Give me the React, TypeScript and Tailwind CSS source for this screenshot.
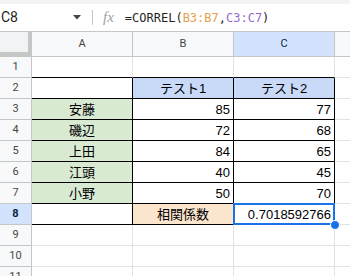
import React from "react";

type Cell = {
  text?: string;
  fill?: string;
  align?: "left" | "center" | "right";
  boxed?: boolean;
  selected?: boolean;
};

const names = ["安藤", "磯辺", "上田", "江頭", "小野"];
const test1 = [85, 72, 84, 40, 50];
const test2 = [77, 68, 65, 45, 70];

function buildRows(): Cell[][] {
  const rows: Cell[][] = [];
  // row 1 — empty, but its bottom edge is the top of the table
  rows.push([{ boxed: false }, { boxed: false }, { boxed: false }]);
  rows.push([
    { boxed: true },
    { text: "テスト1", fill: "bg-[#c9daf8]", align: "center", boxed: true },
    { text: "テスト2", fill: "bg-[#c9daf8]", align: "center", boxed: true },
  ]);
  names.forEach((n, i) => {
    rows.push([
      { text: n, fill: "bg-[#d9ead3]", align: "center", boxed: true },
      { text: String(test1[i]), align: "right", boxed: true },
      { text: String(test2[i]), align: "right", boxed: true },
    ]);
  });
  rows.push([
    { boxed: true },
    { text: "相関係数", fill: "bg-[#fce5cd]", align: "center", boxed: true },
    { text: "0.7018592766", align: "right", boxed: true, selected: true },
  ]);
  rows.push([{}, {}, {}]);
  rows.push([{}, {}, {}]);
  rows.push([{}, {}, {}]);
  return rows;
}

function GridCell({ cell, topOfTable }: { cell: Cell; topOfTable: boolean }) {
  const black = cell.boxed || topOfTable;
  const alignCls =
    cell.align === "center"
      ? "justify-center"
      : cell.align === "right"
      ? "justify-end pr-[3px]"
      : "justify-start pl-[3px]";
  return (
    <div
      className={`relative w-[101px] shrink-0 h-full flex items-center border-b ${
        black ? "border-b-black" : "border-b-[#e2e2e2]"
      } border-r ${cell.boxed ? "border-r-black" : "border-r-[#e2e2e2]"} ${
        cell.fill ?? "bg-white"
      } ${alignCls} ${cell.selected ? "z-10" : ""}`}
    >
      <span className="text-[13px] leading-none text-black whitespace-nowrap">{cell.text}</span>
      {cell.selected && (
        <>
          <div className="absolute -left-[1px] -top-[1px] -right-[1px] -bottom-[1px] border-2 border-[#1a73e8] pointer-events-none" />
          <div className="absolute -right-[6px] -bottom-[6px] w-[10px] h-[10px] rounded-full bg-[#1a73e8] border border-white" />
        </>
      )}
    </div>
  );
}

export default function App() {
  const rows = buildRows();
  return (
    <div
      className="w-[350px] h-[276px] overflow-hidden bg-white"
      style={{ fontFamily: '"Liberation Sans", "Noto Sans CJK JP", Arial, sans-serif' }}
    >
      {/* strip above formula bar */}
      <div className="h-[4px] bg-[#f3f4f6]" />

      {/* formula bar */}
      <div className="h-[28px] flex items-center border-b border-[#c4c7c5] bg-white">
        <div className="w-[86px] flex items-center pl-[1px] pr-[5px]">
          <span className="text-[14px] text-[#1f1f1f] font-[Roboto,sans-serif]">C8</span>
          <svg className="ml-auto" width="8" height="5" viewBox="0 0 8 5">
            <path d="M0 0h8L4 4.5z" fill="#444746" />
          </svg>
        </div>
        <div className="w-px h-[15px] bg-[#c4c7c5] ml-[6px]" />
        <span
          className="ml-[10px] text-[15px] italic text-[#9aa0a6] leading-none"
          style={{ fontFamily: '"Liberation Serif", serif' }}
        >
          fx
        </span>
        <span
          className="ml-[11px] text-[12px] text-[#1f1f1f] whitespace-nowrap"
          style={{ fontFamily: '"DejaVu Sans Mono", "Liberation Mono", monospace' }}
        >
          =CORREL(<span className="text-[#e8a04c]">B3:B7</span>,<span className="text-[#9469cc]">C3:C7</span>)
        </span>
      </div>

      {/* column header */}
      <div className="flex h-[25px] border-b border-[#c4c7c5] bg-[#f8f9fa]">
        <div className="w-[32px] shrink-0 h-full bg-[#f1f3f4] border-r-[4px] border-b-[4px] border-[#c4c7c5] -mb-px box-border" />
        {["A", "B", "C"].map((c) => (
          <div
            key={c}
            className={`w-[101px] shrink-0 h-full flex items-center justify-center border-r border-[#c4c7c5] text-[11px] ${
              c === "C" ? "bg-[#d3e3fd] text-[#0b1f44]" : "text-[#444746]"
            }`}
            style={{ fontFamily: "Roboto, sans-serif" }}
          >
            {c}
          </div>
        ))}
        <div className="flex-1" />
      </div>

      {/* rows */}
      {rows.map((row, i) => {
        const n = i + 1;
        const active = n === 8;
        return (
          <div key={n} className="flex h-[21px]">
            <div
              className={`w-[32px] shrink-0 h-full flex items-center justify-center border-r border-b border-[#c4c7c5] text-[11px] ${
                active ? "bg-[#d3e3fd] text-[#0b1f44] font-bold" : "bg-[#f8f9fa] text-[#444746]"
              }`}
              style={{ fontFamily: "Roboto, sans-serif" }}
            >
              {n}
            </div>
            {row.map((cell, j) => (
              <GridCell key={j} cell={cell} topOfTable={n === 1} />
            ))}
            <div className="flex-1 h-full border-b border-[#e2e2e2]" />
          </div>
        );
      })}
    </div>
  );
}
